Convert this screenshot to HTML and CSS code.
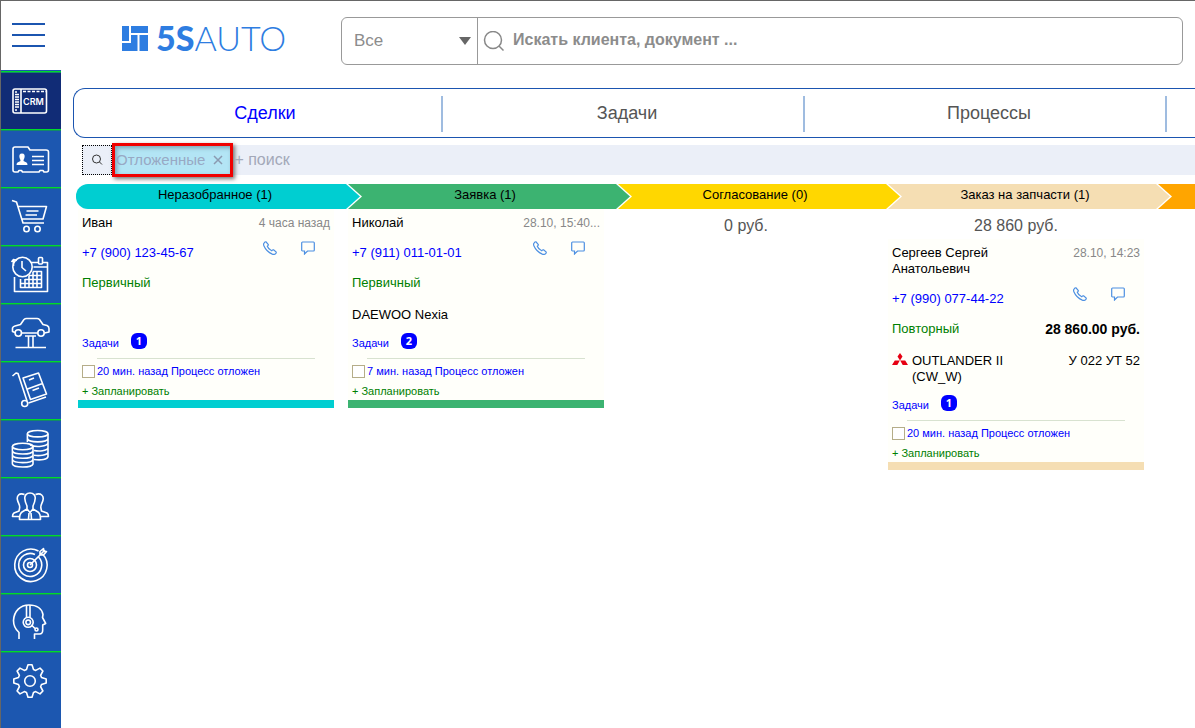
FILE: index.html
```html
<!DOCTYPE html>
<html lang="ru">
<head>
<meta charset="utf-8">
<title>5SAUTO</title>
<link rel="stylesheet" href="styles.css">
</head>
<body>
<svg class="defs" aria-hidden="true">
  <symbol id="phone" viewBox="0 0 14 14"><path d="M1.200 1.800Q2 .6 3 .8L5.300 3.500Q5.500 4.300 4.300 5.300C5 7.200 6.600 8.900 8.700 9.800Q9.700 8.500 10.600 8.800L13.200 11Q13.500 12 12.300 12.900C11.500 13.600 10.300 13.500 9.300 13.100 5.600 11.500 2.500 8.600 1 5 .4 3.700.4 2.700 1.200 1.800Z"/></symbol>
  <symbol id="chat" viewBox="0 0 14 14"><path d="M1.500 1H12.500Q13.300 1 13.300 2V9Q13.300 10 12.500 10H6.500L3.500 13V10H1.500Q.7 10 .7 9V2Q.7 1 1.500 1Z"/></symbol>
</svg>

<header class="topbar">
  <button class="burger" aria-label="Меню"><span></span><span></span><span></span></button>
  <a class="logo" href="#">
    <svg class="logo-mark" viewBox="0 0 26 25" aria-hidden="true"><path d="M0 0H7V15H0ZM9 0H26V7H9ZM9 9H15.500V25H0V17H9ZM17.500 9H26V25H17.500Z"/></svg>
    <span class="logo-bold">5S</span><span class="logo-thin">AUTO</span>
  </a>
  <form class="search">
    <div class="scope">
      <select aria-label="Раздел"><option>Все</option></select>
      <svg class="caret" viewBox="0 0 12 8" aria-hidden="true"><path d="M0 0H12L6 8Z"/></svg>
    </div>
    <label class="query">
      <svg viewBox="0 0 22 20" aria-hidden="true"><circle cx="10" cy="9" r="8.500"/><path d="M16 15 20.500 19.500"/></svg>
      <input type="text" aria-label="Поиск" placeholder="Искать клиента, документ ...">
    </label>
  </form>
</header>

<nav class="sidebar">
  <a class="active" href="#" aria-label="CRM"><svg viewBox="0 0 60 57"><rect x="12" y="17" width="33.500" height="24" rx="2"/><path d="M20 17V41"/><path d="M22 19.500H45" stroke-dasharray="3 1.500"/><path d="M14 20h2M14 22.500h4M14 25h4M14 27.500h4M14 30h4M14 32.500h4M14 35h4M14 38h2"/><text x="22" y="33">CRM</text></svg></a>
  <a href="#" aria-label="Клиенты"><svg viewBox="0 0 60 57"><path d="M14 17H27L29 20H45Q47.500 20 47.500 22V40Q47.500 42 45.500 42H43L42 40.500H39L38 42H21.500L20.500 40.500H18L17 42H14Q12 42 12 40V19Q12 17 14 17Z"/><path d="M31 26.500H43M31 30.500H43M31 34.500H43"/><path class="solid" d="M21 23.500C23.500 23.500 24 25.500 23.500 27.500 23.200 29 22.500 29.500 22.500 31L25.500 32.500Q26.500 33 26.500 35H15.500Q15.500 33 16.500 32.500L19.500 31C19.500 29.500 18.800 29 18.500 27.500 18 25.500 18.500 23.500 21 23.500Z"/></svg></a>
  <a href="#" aria-label="Продажи"><svg viewBox="0 0 60 57"><path d="M11 12.500 15.500 14 22 35H43M17 18.500H45.500L42 31H20.500M25.500 23H37.500M24.500 27H36"/><circle cx="25.500" cy="41" r="2.700"/><circle cx="36.500" cy="41" r="2.700"/></svg></a>
  <a href="#" aria-label="Календарь"><svg viewBox="0 0 60 57"><circle cx="21.500" cy="21" r="9.700"/><path d="M21 15V21.500L25 25M12.500 20V14.500M10.500 16 12.500 13.500 16 14.500"/><path d="M13.500 31V45.500H46.500V16.500H42M37 16.500H30M32.500 21H46.500"/><rect x="37.500" y="11.500" width="4" height="6.500" rx="1"/><path d="M32 25.500H40.500V41.500H19.500V33M28 29.500H40.500M24 33.500H40.500M19.500 37.500H40.500M24 33V41.500M28 29.500V41.500M32 25.500V41.500M36 25.500V41.500"/></svg></a>
  <a href="#" aria-label="Автосервис"><svg viewBox="0 0 60 57"><path d="M14 28.500 11.500 27.500V24Q12 22.500 14 22L19.500 20.500 23 15.500Q24 14.500 25.500 14.500H36Q37.500 14.500 38.500 15.500L42 20.500 46 21.500Q48 22.500 48 24.500V28L43.500 29M20.500 29H36.500"/><circle cx="17.300" cy="29" r="3.200"/><circle cx="40" cy="29" r="3.200"/><path d="M24 32H35M27.500 32V43.500M32 32V43.500M14.500 43.500H45"/></svg></a>
  <a href="#" aria-label="Склад"><svg viewBox="0 0 60 57"><path d="M11.500 14 15 11 17 11.500 26 39M27.500 41 45 35"/><circle cx="23.700" cy="41.500" r="3"/><path d="M22 16 37.500 11 45.500 32 29.500 37.500ZM26.500 27 41.500 21.500M28 18 33 16M31.500 28.500 38 26"/></svg></a>
  <a href="#" aria-label="Финансы"><svg viewBox="0 0 60 57"><ellipse cx="36.700" cy="13.700" rx="10.300" ry="3.200"/><path d="M26.400 13.700V22M47 13.700V36.500C46.500 39.500 40 40.500 33 39.500M26.400 18.500C27.500 23 46 23 47 18.500M29 25C36 28 46 26 47 23.200M33 30.500C38 31.500 46 31 47 28M33 35.300C38 36 46 35.500 47 32.500"/><ellipse cx="21.700" cy="26.500" rx="10.300" ry="3.200"/><path d="M11.400 26.500V44C12.500 48 31 48 32 44V26.500M11.400 31C12.500 35 31 35 32 31M11.400 35.300C12.500 39.300 31 39.300 32 35.300M11.400 39.600C12.500 43.600 31 43.600 32 39.600"/></svg></a>
  <a href="#" aria-label="Сотрудники"><svg viewBox="0 0 60 57"><path d="M29 15C32.500 15 34.500 17.500 34.200 20.500 34 24 33 26 32 28V31L37 34Q39.500 35.500 39.500 41.500H18.500Q18.500 35.500 21 34L26 31V28C25 26 24 24 23.800 20.500 23.500 17.500 25.500 15 29 15ZM26 31 29 34.500 32 31M28 35 27.500 41M30 35 30.500 41"/><path d="M23.500 16.500C18 14.500 15.500 18 16.500 22 17 25 19.500 27 18.500 30.500L18 33 13 35Q11.500 36 11.500 38.500H18M34.500 16.500C40 14.500 43 18 42 22 41.500 25 39 27 40 30.500L40.500 33 46 35Q47.500 36 47.500 38.500H40"/></svg></a>
  <a href="#" aria-label="Цели"><svg viewBox="0 0 60 57"><path d="M41.500 18A16.200 16.200 0 1 1 37.500 15M37.500 21A11.500 11.500 0 1 1 34 18.500"/><circle cx="29" cy="29" r="6.500"/><circle cx="29" cy="29" r="2.500"/><path d="M29 29 44 14M39 19V15.500L42.500 12.500V15.500H45.500L42.500 19Z"/></svg></a>
  <a href="#" aria-label="Поддержка"><svg viewBox="0 0 60 57"><path d="M18 45V38.500C14 35 12.500 31 12.500 26.500 13 17 19.500 11 28 11 36 11 41 15 42 20.500L41.500 23.500 44.700 29.500 41.700 31V36Q41.700 40 38.500 40H33.500V45"/><path d="M25.500 11V23.500M29 11V23.500M30.500 31 34 34.500"/><circle cx="27.200" cy="28.300" r="5"/><circle cx="27.200" cy="28.300" r="2.300"/><circle cx="35.500" cy="35.500" r="1.500"/></svg></a>
  <a href="#" aria-label="Настройки"><svg viewBox="0 0 60 57"><path transform="translate(29 29)" d="M-3.500-11.500-2-16.200H2L3.500-11.500 5.700-10.600 10-12.900 12.900-10 10.600-5.700 11.500-3.500 16.200-2V2L11.500 3.500 10.600 5.700 12.900 10 10 12.900 5.700 10.600 3.500 11.500 2 16.200H-2L-3.500 11.500-5.700 10.600-10 12.900-12.900 10-10.600 5.700-11.500 3.500-16.200 2V-2L-11.500-3.500-10.600-5.700-12.900-10-10-12.900-5.700-10.600Z"/><circle cx="29" cy="29" r="5.300"/></svg></a>
</nav>

<main>
  <nav class="tabs">
    <a class="current" href="#">Сделки</a>
    <a href="#">Задачи</a>
    <a href="#">Процессы</a>
    <a href="#" aria-label="Ещё"></a>
  </nav>

  <div class="filter">
    <button class="find" aria-label="Найти"><svg viewBox="0 0 12 12"><circle cx="5.500" cy="5" r="4"/><path d="M8.500 8 11 10.500"/></svg></button>
    <span class="chip">Отложенные<button aria-label="Убрать"><svg viewBox="0 0 10 10"><path d="M1 1 9 9M9 1 1 9"/></svg></button></span>
    <input type="text" aria-label="Фильтр" placeholder="+ поиск">
  </div>

  <div class="board">
    <section class="column new">
      <h2 class="stage">Неразобранное (1)</h2>
      <article class="card">
        <div class="row"><span class="name">Иван</span><time>4 часа назад</time></div>
        <div class="row contact"><a href="#">+7 (900) 123-45-67</a><span class="actions"><button aria-label="Позвонить"><svg><use href="#phone"/></svg></button><button aria-label="Написать"><svg><use href="#chat"/></svg></button></span></div>
        <div class="row kind"><span>Первичный</span></div>
        <div class="row car"></div>
        <div class="tasks"><a href="#">Задачи</a><b>1</b></div>
        <hr>
        <label class="task"><input type="checkbox">20 мин. назад Процесс отложен</label>
        <a class="plan" href="#">+ Запланировать</a>
      </article>
    </section>

    <section class="column request">
      <h2 class="stage">Заявка (1)</h2>
      <article class="card">
        <div class="row"><span class="name">Николай</span><time>28.10, 15:40...</time></div>
        <div class="row contact"><a href="#">+7 (911) 011-01-01</a><span class="actions"><button aria-label="Позвонить"><svg><use href="#phone"/></svg></button><button aria-label="Написать"><svg><use href="#chat"/></svg></button></span></div>
        <div class="row kind"><span>Первичный</span></div>
        <div class="row car"><span>DAEWOO Nexia</span></div>
        <div class="tasks"><a href="#">Задачи</a><b>2</b></div>
        <hr>
        <label class="task"><input type="checkbox">7 мин. назад Процесс отложен</label>
        <a class="plan" href="#">+ Запланировать</a>
      </article>
    </section>

    <section class="column approval">
      <h2 class="stage">Согласование (0)</h2>
      <p class="sum">0 руб.</p>
    </section>

    <section class="column parts">
      <h2 class="stage">Заказ на запчасти (1)</h2>
      <p class="sum">28 860 руб.</p>
      <article class="card">
        <div class="row"><span class="name">Сергеев Сергей Анатольевич</span><time>28.10, 14:23</time></div>
        <div class="row contact"><a href="#">+7 (990) 077-44-22</a><span class="actions"><button aria-label="Позвонить"><svg><use href="#phone"/></svg></button><button aria-label="Написать"><svg><use href="#chat"/></svg></button></span></div>
        <div class="row kind"><span>Повторный</span><strong>28 860.00 руб.</strong></div>
        <div class="row car"><svg class="make" viewBox="0 0 16 12" aria-label="Mitsubishi"><path d="M8 0 10.500 3.500 8 7.500 5.500 3.500ZM7.800 7.500 5.300 12H0L2.800 7.500ZM8.200 7.500H13.200L16 12H10.700Z"/></svg><span class="model">OUTLANDER II (CW_W)</span><span class="plate">У 022 УТ 52</span></div>
        <div class="tasks"><a href="#">Задачи</a><b>1</b></div>
        <hr>
        <label class="task"><input type="checkbox">20 мин. назад Процесс отложен</label>
        <a class="plan" href="#">+ Запланировать</a>
      </article>
    </section>

    <section class="column next">
      <div class="stage"></div>
    </section>
  </div>
</main>
</body>
</html>
```
FILE: styles.css
```css
* { box-sizing: border-box; }

body {
  margin: 0;
  min-height: 100vh;
  display: grid;
  grid-template: 69px 1fr / 60px minmax(0, 1fr);
  border-top: 1px solid #666;
  border-left: 1px solid #666;
  background: #fff;
  font-family: "Liberation Sans", Arial, sans-serif;
  font-size: 13px;
  line-height: 16px;
  color: #000;
}

a { color: #00f; text-decoration: none; }
button { padding: 0; border: 0; background: none; cursor: pointer; }
svg { display: block; fill: none; }
.defs { position: absolute; width: 0; height: 0; }

/* Top bar */
.topbar {
  grid-column: 1 / -1;
  display: flex;
  align-items: flex-start;
  padding: 16px 12px 0 11px;
}

.burger {
  display: flex;
  flex-direction: column;
  gap: 9px;
  width: 33px;
  margin: 6px 77px 0 0;
}
.burger span { height: 2px; background: #1b55b0; }

.logo {
  display: flex;
  align-items: center;
  height: 42px;
  width: 219px;
  color: #2e7de1;
  font-family: Lato, sans-serif;
  font-size: 34px;
  line-height: 42px;
}
.logo-mark { width: 26px; height: 25px; margin-right: 8px; fill: #2e7de1; }
.logo-bold { font-weight: 900; }
.logo-thin { font-weight: 300; }

.search {
  flex: 1;
  display: flex;
  height: 48px;
  border: 1px solid #999;
  border-radius: 6px;
}
.scope { position: relative; width: 136px; border-right: 1px solid #999; }
.scope select {
  width: 100%;
  height: 44px;
  padding: 0 12px;
  border: 0;
  background: none;
  appearance: none;
  color: #8c8c8c;
  font: 17px "Liberation Sans", Arial, sans-serif;
}
.caret {
  position: absolute;
  right: 6px;
  top: 19px;
  width: 12px;
  height: 8px;
  fill: #666;
  pointer-events: none;
}
.query { flex: 1; display: flex; align-items: center; gap: 8px; padding-left: 5px; }
.query svg { width: 22px; height: 20px; stroke: #888; stroke-width: 1.5; }
.query input {
  flex: 1;
  height: 44px;
  padding: 0 0 2px;
  border: 0;
  background: none;
  font: bold 16px "Liberation Sans", Arial, sans-serif;
}
.query input::placeholder { color: #8c8c8c; opacity: 1; }

/* Sidebar */
.sidebar { padding-top: 1px; background: #1c57b0; }
.sidebar a {
  display: block;
  height: 58px;
  border-top: 1px solid #00dc28;
  box-shadow: inset 0 1px #128a68;
}
.sidebar .active { background: #112c76; }
.sidebar svg {
  width: 60px;
  height: 57px;
  stroke: #fff;
  stroke-width: 1.6;
  stroke-linejoin: round;
}
.sidebar .solid { fill: #fff; stroke: none; }
.sidebar text { fill: #fff; stroke: none; font: 600 9px Inter, sans-serif; }

main { padding-top: 18px; overflow: hidden; }

/* Tabs */
.tabs {
  display: flex;
  height: 50px;
  margin-left: 12px;
  padding-left: 7px;
  border: 1px solid #1b55b0;
  border-right: 0;
  border-radius: 12px 0 0 12px;
}
.tabs a {
  flex: 0 0 362px;
  height: 36px;
  margin-top: 7px;
  padding-left: 8px;
  border-right: 2px solid #9fbce0;
  color: #555;
  font-size: 18px;
  line-height: 34px;
  text-align: center;
}
.tabs .current { color: #00f; }

/* Filter line */
.filter {
  display: flex;
  align-items: center;
  height: 30px;
  margin: 7px 0 9px 21px;
  background: #ebeff8;
}
.find {
  display: grid;
  place-items: center;
  width: 30px;
  height: 30px;
  border: 1px dotted #000;
}
.find svg { width: 12px; height: 12px; stroke: #333; }
.chip {
  display: flex;
  align-items: center;
  gap: 8px;
  height: 34px;
  padding: 0 7px 0 1px;
  border: 3px solid #f00000;
  background: #b3e5f5;
  box-shadow: 2px 2px 4px #777, inset 2px 2px 4px #7fa5b5;
  color: #98a9c4;
  font-size: 15px;
}
.chip svg { width: 10px; height: 10px; stroke: #8b9ab0; stroke-width: 1.5; }
.filter input {
  flex: 1;
  padding: 0 1px;
  border: 0;
  background: none;
  font: 16px "Liberation Sans", Arial, sans-serif;
}
.filter input::placeholder { color: #a3a8b8; opacity: 1; }

/* Deal board */
.board { display: flex; margin-left: 17px; }
.column { flex: 0 0 270px; padding-right: 14px; }
.new { --tone: #00ced1; }
.request { --tone: #3cb371; }
.approval { --tone: #ffd700; }
.parts { --tone: #f5deb3; }
.next { --tone: #ffa500; }

.stage {
  position: relative;
  height: 25px;
  margin: 0 -12px 0 -2px;
  padding-left: 8px;
  background: var(--tone);
  font-size: 13px;
  font-weight: normal;
  line-height: 22px;
  text-align: center;
}
.new .stage { border-radius: 12px 0 0 12px; }
.stage::before,
.stage::after {
  content: "";
  position: absolute;
  z-index: 1;
  top: 0;
  left: 100%;
  height: 100%;
}
.stage::before {
  width: 16px;
  background: #fff;
  clip-path: polygon(0 0, 2px 0, 100% 50%, 2px 100%, 0 100%);
}
.stage::after {
  width: 14px;
  background: var(--tone);
  clip-path: polygon(0 0, 100% 50%, 0 100%);
}

.sum {
  margin: 0;
  height: 30px;
  color: #555;
  font-size: 16px;
  line-height: 34px;
  text-align: center;
}

.card {
  padding-top: 6px;
  border-bottom: 8px solid var(--tone);
  background: #fffffa;
}
.row { display: flex; justify-content: space-between; padding: 0 4px; }
.name { max-width: 130px; }
.row time { color: #888; font-size: 12px; }
.contact, .kind { margin-top: 14px; }
.actions { display: flex; gap: 24px; height: 14px; margin: -4px 15px 0 0; }
.actions svg { width: 14px; height: 14px; stroke: #4d90e2; stroke-width: 1.2; }
.kind { color: #008000; }
.kind strong { color: #000; font-size: 14px; }
.car { min-height: 16px; margin-top: 16px; }
.make { width: 16px; height: 12px; fill: #e60012; }
.model { flex: 1; margin-left: 4px; padding-right: 50px; }
.plate { white-space: nowrap; }

.tasks {
  display: flex;
  align-items: center;
  gap: 12px;
  height: 16px;
  margin-top: 12px;
  padding: 0 4px;
  font-size: 11px;
}
.tasks b {
  width: 16px;
  height: 16px;
  margin-top: -4px;
  border-radius: 6px;
  background: #00f;
  color: #fff;
  font: bold 11px/16px "Noto Sans", sans-serif;
  text-align: center;
}
.card hr { height: 1px; margin: 7px 19px 4px; border: 0; background: #d8e2d0; }
.task {
  display: flex;
  align-items: center;
  gap: 2px;
  padding: 0 4px;
  color: #00f;
  font-size: 11px;
}
.task input {
  appearance: none;
  width: 13px;
  height: 13px;
  margin: 0;
  border: 1px solid #b5ad88;
  background: #fff;
}
.plan { display: block; padding: 4px 4px 1px; color: #008000; font-size: 11px; }
```
